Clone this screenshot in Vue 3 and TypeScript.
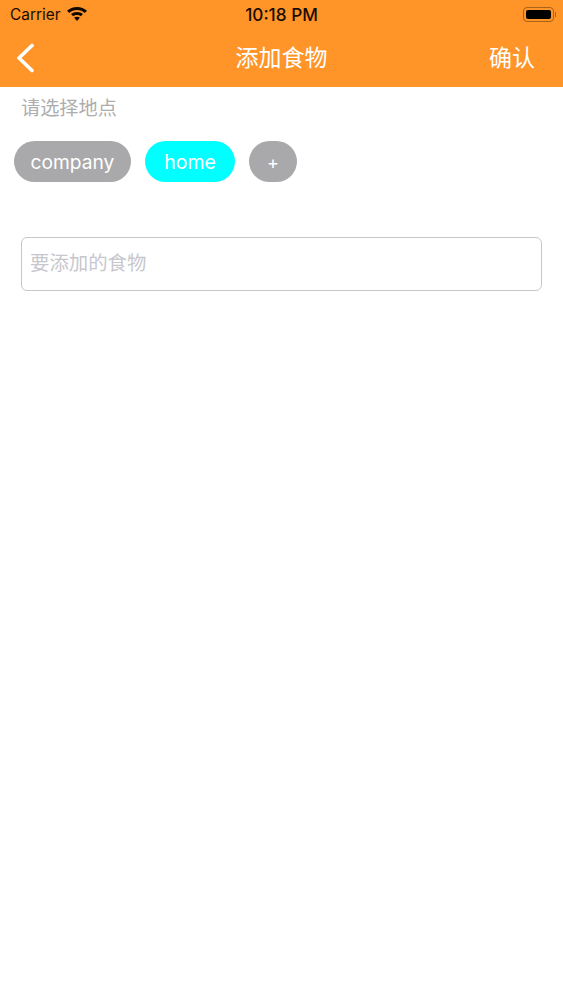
<script setup lang="ts">
const places: { name: string; active: boolean }[] = [
  { name: 'company', active: false },
  { name: 'home', active: true },
]
</script>

<template>
  <div class="page">
    <header class="header">
      <div class="status">
        <div class="status-left">
          <span class="carrier">Carrier</span>
          <svg class="wifi" width="20" height="15" viewBox="0 0 19 15" preserveAspectRatio="none" aria-hidden="true">
            <path d="M9.5 0C5.8 0 2.5 1.4 0 3.8l2.1 2.2C4 4.200 6.600 3.100 9.500 3.100s5.500 1.100 7.400 2.900L19 3.800C16.500 1.400 13.200 0 9.500 0z" fill="#110600" />
            <path d="M9.5 4.900c-2.200 0-4.200.9-5.700 2.200l2.100 2.200c1-.9 2.200-1.400 3.600-1.400s2.600.5 3.600 1.400l2.100-2.200c-1.500-1.300-3.500-2.200-5.700-2.200z" fill="#110600" />
            <path d="M9.5 9.700c-1.100 0-2 .4-2.700 1l2.700 3.300 2.700-3.300c-.7-.6-1.600-1-2.700-1z" fill="#110600" />
          </svg>
        </div>
        <span class="time">10:18 PM</span>
        <div class="battery">
          <div class="battery-body"><div class="battery-fill"></div></div>
          <div class="battery-cap"></div>
        </div>
      </div>
      <nav class="nav">
        <svg class="back" width="20" height="30" viewBox="0 0 20 30" aria-hidden="true">
          <path d="M16 2.500 3 15l13 12.500" fill="none" stroke="#fff" stroke-width="3.600" stroke-linecap="round" stroke-linejoin="round" />
        </svg>
        <h1 class="title">添加食物</h1>
        <span class="confirm">确认</span>
      </nav>
    </header>

    <main class="content">
      <p class="label">请选择地点</p>
      <div class="chips">
        <button
          v-for="place in places"
          :key="place.name"
          class="chip"
          :class="{ active: place.active }"
          type="button"
        >{{ place.name }}</button>
        <button class="chip add" type="button">+</button>
      </div>
      <div class="field">
        <span class="placeholder">要添加的食物</span>
      </div>
    </main>
  </div>
</template>

<style>
html,
body {
  margin: 0;
  background: #fff;
}
</style>

<style scoped>
.page {
  width: 563px;
  height: 1000px;
  background: #fff;
  overflow: hidden;
  font-family: "Inter", "Liberation Sans", "Noto Sans CJK SC", sans-serif;
}

.header {
  height: 87px;
  background: #ff9428;
  display: flex;
  flex-direction: column;
}

.status {
  height: 29px;
  display: grid;
  grid-template-columns: 1fr auto 1fr;
  align-items: center;
  padding: 0 7px 0 10px;
  color: #1a0c00;
}

.status-left {
  display: flex;
  align-items: center;
  gap: 7px;
}

.carrier {
  font-size: 15.400px;
  line-height: 29px;
}

.wifi {
  display: block;
}

.time {
  font-size: 17.200px;
  font-weight: 500;
  line-height: 29px;
  margin-right: 3px;
}

.battery {
  justify-self: end;
  display: flex;
  align-items: center;
  gap: 1px;
}

.battery-body {
  box-sizing: border-box;
  width: 31px;
  height: 15px;
  border: 1px solid #a8621a;
  border-radius: 4px;
  padding: 2px;
}

.battery-fill {
  height: 100%;
  background: #000;
  border-radius: 2px;
}

.battery-cap {
  width: 1px;
  height: 5px;
  background: #a8621a;
}

.nav {
  flex: 1;
  display: grid;
  grid-template-columns: 1fr auto 1fr;
  align-items: center;
  padding: 0 28px 4px;
  color: #fff;
}

.back {
  display: block;
  margin: 3px 0 0 -12px;
}

.title {
  margin: 0;
  font-size: 23px;
  font-weight: 400;
  line-height: 30px;
  font-family: "Noto Sans CJK SC", sans-serif;
}

.confirm {
  justify-self: end;
  font-size: 23px;
  line-height: 30px;
  font-family: "Noto Sans CJK SC", sans-serif;
}

.content {
  display: flex;
  flex-direction: column;
}

.label {
  margin: 7px 0 0 21px;
  font-size: 19.200px;
  line-height: 26px;
  color: #adadad;
  font-family: "Noto Sans CJK SC", sans-serif;
}

.chips {
  display: flex;
  gap: 14px;
  margin: 21px 0 0 14px;
}

.chip {
  width: 117px;
  height: 41px;
  border: none;
  border-radius: 21px;
  padding: 2px 0 0;
  background: #a9a9ab;
  color: #fff;
  font-family: inherit;
  font-size: 19.200px;
  line-height: 39px;
}

.chip.active {
  width: 90px;
  background: #00ffff;
  font-size: 19.500px;
}

.chip.add {
  width: 48px;
  font-size: 18px;
}

.field {
  box-sizing: border-box;
  height: 54px;
  margin: 55px 21px 0;
  border: 1px solid #c8c8cb;
  border-radius: 6px;
  display: flex;
  align-items: center;
  padding: 0 0 6px 8px;
}

.placeholder {
  font-size: 19.400px;
  color: #c7c7cd;
  font-family: "Noto Sans CJK SC", sans-serif;
}
</style>
